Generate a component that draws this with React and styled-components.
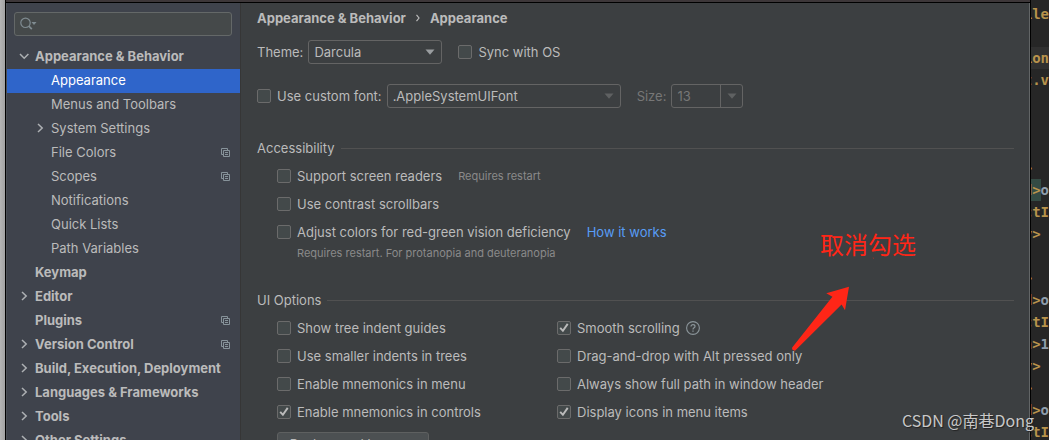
import React from "react";
import styled, { createGlobalStyle } from "styled-components";

const tree = [
	{ label: "Appearance & Behavior", depth: 0, arrow: "down" },
	{ label: "Appearance", depth: 1, selected: true },
	{ label: "Menus and Toolbars", depth: 1 },
	{ label: "System Settings", depth: 1, arrow: "right" },
	{ label: "File Colors", depth: 1, project: true },
	{ label: "Scopes", depth: 1, project: true },
	{ label: "Notifications", depth: 1 },
	{ label: "Quick Lists", depth: 1 },
	{ label: "Path Variables", depth: 1 },
	{ label: "Keymap", depth: 0 },
	{ label: "Editor", depth: 0, arrow: "right" },
	{ label: "Plugins", depth: 0, project: true },
	{ label: "Version Control", depth: 0, arrow: "right", project: true },
	{ label: "Build, Execution, Deployment", depth: 0, arrow: "right" },
	{ label: "Languages & Frameworks", depth: 0, arrow: "right" },
	{ label: "Tools", depth: 0, arrow: "right" },
	{ label: "Other Settings", depth: 0, arrow: "right" },
];

const options = [
	{ label: "Show tree indent guides" },
	{ label: "Smooth scrolling", checked: true, help: true },
	{ label: "Use smaller indents in trees" },
	{ label: "Drag-and-drop with Alt pressed only" },
	{ label: "Enable mnemonics in menu" },
	{ label: "Always show full path in window header" },
	{ label: "Enable mnemonics in controls", checked: true },
	{ label: "Display icons in menu items", checked: true },
];

// visible ends of the code lines: [hidden/tag part, value part]
const code = [
	["ile", ""],
	["", ""],
	["ion", "", "line"],
	["t.v", ""],
	["", ""],
	["", ""],
	["", ""],
	[">  ", ""],
	["d>", "o", "match"],
	["ctI", ""],
	["y> ", ""],
	["", ""],
	[">  ", ""],
	["d>", "o"],
	["ctI", ""],
	["n>", "1"],
	["y> ", ""],
	[">  ", ""],
	["d>", "o"],
	["ctI", ""],
];

const Chevron = ({ dir }) => (
	<svg width="12" height="12" viewBox="0 0 12 12" fill="none" stroke="#adb0b3" strokeWidth="1.5">
		{dir === "down" && <path d="M2 4l4.2 4.2L10.4 4" />}
		{dir === "right" && <path d="M4 2l4.2 4L4 10" />}
	</svg>
);

const ProjectIcon = () => (
	<svg width="9" height="9" viewBox="0 0 9 9" fill="none" stroke="#87939a">
		<path d="M2 6.5H.5v-6h6V2" />
		<path d="M2.5 2.5h6v6h-6z" />
		<path d="M4 4.5h3M4 6.5h3" />
	</svg>
);

const SearchIcon = () => (
	<svg width="17" height="14" viewBox="0 0 17 14" fill="none">
		<circle cx="5.5" cy="5.8" r="4.7" stroke="#7f8b91" strokeWidth="1.2" />
		<path d="M8.8 9.2l3 3" stroke="#7f8b91" strokeWidth="1.8" />
		<path d="M11.5 5h5L14 8z" fill="#7f8b91" />
	</svg>
);

const HelpIcon = () => (
	<svg width="14" height="14" viewBox="0 0 14 14" fill="none" stroke="#8b959a">
		<circle cx="7" cy="7" r="6.4" strokeWidth="1.1" />
		<path d="M5 5.6C5 4.3 5.9 3.6 7 3.6s2 .7 2 1.8c0 1.5-2 1.4-2 3.1" strokeWidth="1.2" />
		<path d="M7 9.6v1.2" strokeWidth="1.3" />
	</svg>
);

const Triangle = ({ color }) => (
	<svg width="10" height="6" viewBox="0 0 10 6">
		<path d="M.5 .5h9L5 5.8z" fill={color} />
	</svg>
);

const CheckBox = ({ label, checked, children }) => (
	<CheckRow>
		<CheckLabel>
			<Box>
				<CheckInput type="checkbox" defaultChecked={checked} />
				<Tick width="14" height="14" viewBox="0 0 14 14">
					<path d="M3.2 6.8l2.7 3 4.8-6.9" fill="none" stroke="#bbbbbb" strokeWidth="1.9" />
				</Tick>
			</Box>
			{label}
		</CheckLabel>
		{children}
	</CheckRow>
);

const App = () => {
	return (
		<Desktop>
			<GlobalStyle />
			<Backdrop />
			<Dialog>
				<Sidebar>
					<SearchField>
						<SearchIcon />
						<SearchInput type="search" aria-label="Search settings" />
					</SearchField>
					<Tree>
						{tree.map((item) => (
							<li key={item.label}>
								<TreeItem type="button" $depth={item.depth} $selected={item.selected}>
									<Chevron dir={item.arrow} />
									<TreeText>{item.label}</TreeText>
									{item.project && <ProjectIcon />}
								</TreeItem>
							</li>
						))}
					</Tree>
				</Sidebar>
				<Content>
					<Breadcrumb>
						<span>Appearance &amp; Behavior</span>
						<svg width="4" height="8" viewBox="0 0 4 8" fill="none" stroke="#bbbbbb" strokeWidth="1.2">
							<path d="M.5 .8L3 4 .5 7.2" />
						</svg>
						<span>Appearance</span>
					</Breadcrumb>
					<FormRow>
						<label htmlFor="theme">Theme:</label>
						<SelectBox $width={134}>
							<Select id="theme">
								<option>Darcula</option>
							</Select>
							<Arrow>
								<Triangle color="#9a9da0" />
							</Arrow>
						</SelectBox>
						<Spaced>
							<CheckBox label="Sync with OS" />
						</Spaced>
					</FormRow>
					<FormRow $gap={20}>
						<CheckBox label="Use custom font:" />
						<SelectBox $width={234}>
							<Select aria-label="Custom font">
								<option>.AppleSystemUIFont</option>
							</Select>
							<Arrow>
								<Triangle color="#5f6162" />
							</Arrow>
						</SelectBox>
						<SizeLabel htmlFor="size">Size:</SizeLabel>
						<SelectBox $width={72}>
							<Select id="size" disabled>
								<option>13</option>
							</Select>
							<Arrow $divided>
								<Triangle color="#5f6162" />
							</Arrow>
						</SelectBox>
					</FormRow>
					<Section>
						<SectionTitle>Accessibility</SectionTitle>
						<Indented>
							<CheckBox label="Support screen readers">
								<Hint>Requires restart</Hint>
							</CheckBox>
							<CheckBox label="Use contrast scrollbars" />
							<CheckBox label="Adjust colors for red-green vision deficiency">
								<Link href="#">How it works</Link>
							</CheckBox>
							<Comment>Requires restart. For protanopia and deuteranopia</Comment>
						</Indented>
					</Section>
					<Section>
						<SectionTitle>UI Options</SectionTitle>
						<Indented>
							<OptionGrid>
								{options.map((option) => (
									<CheckBox key={option.label} label={option.label} checked={option.checked}>
										{option.help && <HelpIcon />}
									</CheckBox>
								))}
							</OptionGrid>
							<Button type="button">Background Image...</Button>
						</Indented>
					</Section>
				</Content>
			</Dialog>
			<Code>
				{code.map(([tag, value, mark], i) => (
					<CodeLine key={i} $current={mark === "line"}>
						<Tag $match={mark === "match"}>{tag}</Tag>
						<Value>{value}</Value>
					</CodeLine>
				))}
			</Code>
			<Note>取消勾选</Note>
			<NoteArrow width="84" height="96" viewBox="790 256 84 96" fill="#ff2617">
				<path d="M849 286.7L826.3 293.2 832.4 296.8 792.2 347.6Q791.4 350.4 795 350.8L841.6 304.6 845 310.2z" />
				<path d="M872.5 257l1.5 1.2 1.8-1-1.3 2.4z" />
			</NoteArrow>
			<Watermark>CSDN @南巷Dong</Watermark>
		</Desktop>
	);
};

const GlobalStyle = createGlobalStyle`
	* {
		box-sizing: border-box;
	}

	body {
		margin: 0;
		overflow: hidden;
		background: #2b2b2b;
		color: #bbbbbb;
		font: 13px/20px Inter, "Noto Sans CJK SC", sans-serif;
	}

	button,
	input,
	select {
		font: inherit;
		color: inherit;
	}

	svg {
		flex: none;
	}
`;

const Desktop = styled.div`
	position: relative;
	display: grid;
	grid-template-columns: 5px 1fr 18px;
	height: 100vh;
	overflow: hidden;
`;

const Backdrop = styled.div`
	background: linear-gradient(to right, #b5b5b5, #a2a2a2);
`;

const Dialog = styled.div`
	display: flex;
	min-width: 0;
	min-height: 0;
	border-left: 1px solid #000000;
	border-right: 1px solid #000000;
	background: linear-gradient(#3d3739 2px, #000000 2px, #000000 3px, #3c3f41 3px);
	padding-top: 3px;
`;

const Sidebar = styled.nav`
	flex: none;
	width: 235px;
	background: #3f434c;
	border-right: 1px solid #363636;
	border-left: 1px solid #4c5057;
	padding-top: 9px;
`;

const SearchField = styled.label`
	display: flex;
	align-items: center;
	height: 24px;
	margin: 0 8px 9px 7px;
	padding: 0 5px;
	background: #45494a;
	border: 1px solid #646868;
	border-radius: 3px;
`;

const SearchInput = styled.input`
	flex: 1;
	min-width: 0;
	border: 0;
	outline: 0;
	background: none;
`;

const Tree = styled.ul`
	list-style: none;
	margin: 0;
	padding: 0;
`;

const TreeItem = styled.button`
	display: flex;
	align-items: center;
	gap: 5px;
	width: 100%;
	height: 24px;
	border: 0;
	padding: 0 10px 2px ${(p) => 11 + p.$depth * 16}px;
	text-align: left;
	white-space: nowrap;
	background: ${(p) => (p.$selected ? "#2f65ca" : "none")};
	color: ${(p) => (p.$selected ? "#ffffff" : "#bbbbbb")};
	font-weight: ${(p) => (p.$depth ? 400 : 700)};
`;

const TreeText = styled.span`
	flex: 1;
`;

const Content = styled.main`
	flex: 1;
	min-width: 0;
	padding: 5px 15px 0 16px;
	border-right: 1px solid #626566;
`;

const Breadcrumb = styled.div`
	display: flex;
	align-items: center;
	gap: 10px;
	font-weight: 700;
`;

const FormRow = styled.div`
	display: flex;
	align-items: center;
	height: 24px;
	gap: 5px;
	margin-top: ${(p) => p.$gap || 12}px;
`;

const SelectBox = styled.div`
	display: grid;
	width: ${(p) => p.$width}px;
	height: 24px;
	border: 1px solid #646464;
	border-radius: 3px;
`;

const Select = styled.select`
	grid-area: 1 / 1;
	appearance: none;
	width: 100%;
	border: 0;
	padding: 0 5px;
	background: none;

	&:disabled {
		color: #777777;
		opacity: 1;
	}
`;

const Arrow = styled.span`
	grid-area: 1 / 1;
	justify-self: end;
	display: grid;
	place-items: center;
	width: 22px;
	border-left: ${(p) => (p.$divided ? "1px solid #646464" : "0")};
	pointer-events: none;
`;

const Spaced = styled.div`
	margin-left: 11px;
`;

const SizeLabel = styled.label`
	margin-left: 11px;
	color: #777777;
`;

const Section = styled.section`
	margin-top: 30px;
`;

const SectionTitle = styled.h2`
	display: flex;
	align-items: center;
	gap: 6px;
	margin: 0 0 4px;
	font-size: 13px;
	font-weight: 400;

	&::after {
		content: "";
		flex: 1;
		height: 1px;
		background: #515151;
	}
`;

const Indented = styled.div`
	padding-left: 20px;
`;

const CheckRow = styled.div`
	display: flex;
	align-items: center;
	height: 28px;
	white-space: nowrap;
`;

const CheckLabel = styled.label`
	display: flex;
	align-items: center;
	gap: 6px;

	& + svg {
		margin-left: 6px;
	}
`;

const Box = styled.span`
	display: grid;
	width: 14px;
	height: 14px;
`;

const Tick = styled.svg`
	grid-area: 1 / 1;
	visibility: hidden;
	pointer-events: none;
`;

const CheckInput = styled.input`
	grid-area: 1 / 1;
	appearance: none;
	width: 14px;
	height: 14px;
	margin: 0;
	background: #43494a;
	border: 1px solid #6b6b6b;
	border-radius: 2px;

	&:checked + ${Tick} {
		visibility: visible;
	}
`;

const Hint = styled.span`
	margin-left: 16px;
	font-size: 11px;
	color: #8a8a8a;
`;

const Link = styled.a`
	margin-left: 16px;
	color: #589df6;
	text-decoration: none;
`;

const Comment = styled.div`
	padding-left: 20px;
	font-size: 11px;
	line-height: 14px;
	color: #8a8a8a;
`;

const OptionGrid = styled.div`
	display: grid;
	grid-template-columns: 280px 1fr;
`;

const Button = styled.button`
	margin-top: 6px;
	width: 152px;
	height: 24px;
	padding: 0;
	border: 1px solid #5e6060;
	border-radius: 3px;
	background: #4c5052;
`;

const Code = styled.div`
	padding-top: 3px;
	overflow: hidden;
	background: #262626;
	font: 700 14px/22px "DejaVu Sans Mono", "Liberation Mono", monospace;
	white-space: pre;
`;

const CodeLine = styled.div`
	display: flex;
	justify-content: flex-end;
	height: 22px;
	background: ${(p) => (p.$current ? "#303030" : "none")};
`;

const Tag = styled.span`
	color: #b8934c;
	background: ${(p) => (p.$match ? "#344b44" : "none")};
`;

const Value = styled.span`
	color: #8f9dab;
`;

const Note = styled.div`
	position: absolute;
	top: 229px;
	right: 133px;
	font-family: "Noto Sans CJK SC", sans-serif;
	font-size: 24px;
	line-height: 30px;
	color: #ff2617;
`;

const NoteArrow = styled.svg`
	position: absolute;
	top: 256px;
	right: 175px;
`;

const Watermark = styled.div`
	position: absolute;
	top: 409px;
	right: 15px;
	font-family: "Noto Sans CJK SC", sans-serif;
	font-size: 16px;
	line-height: 22px;
	color: #c8c8c8;
	text-shadow: 1px 1px 1px #222222;
`;

export default App;
